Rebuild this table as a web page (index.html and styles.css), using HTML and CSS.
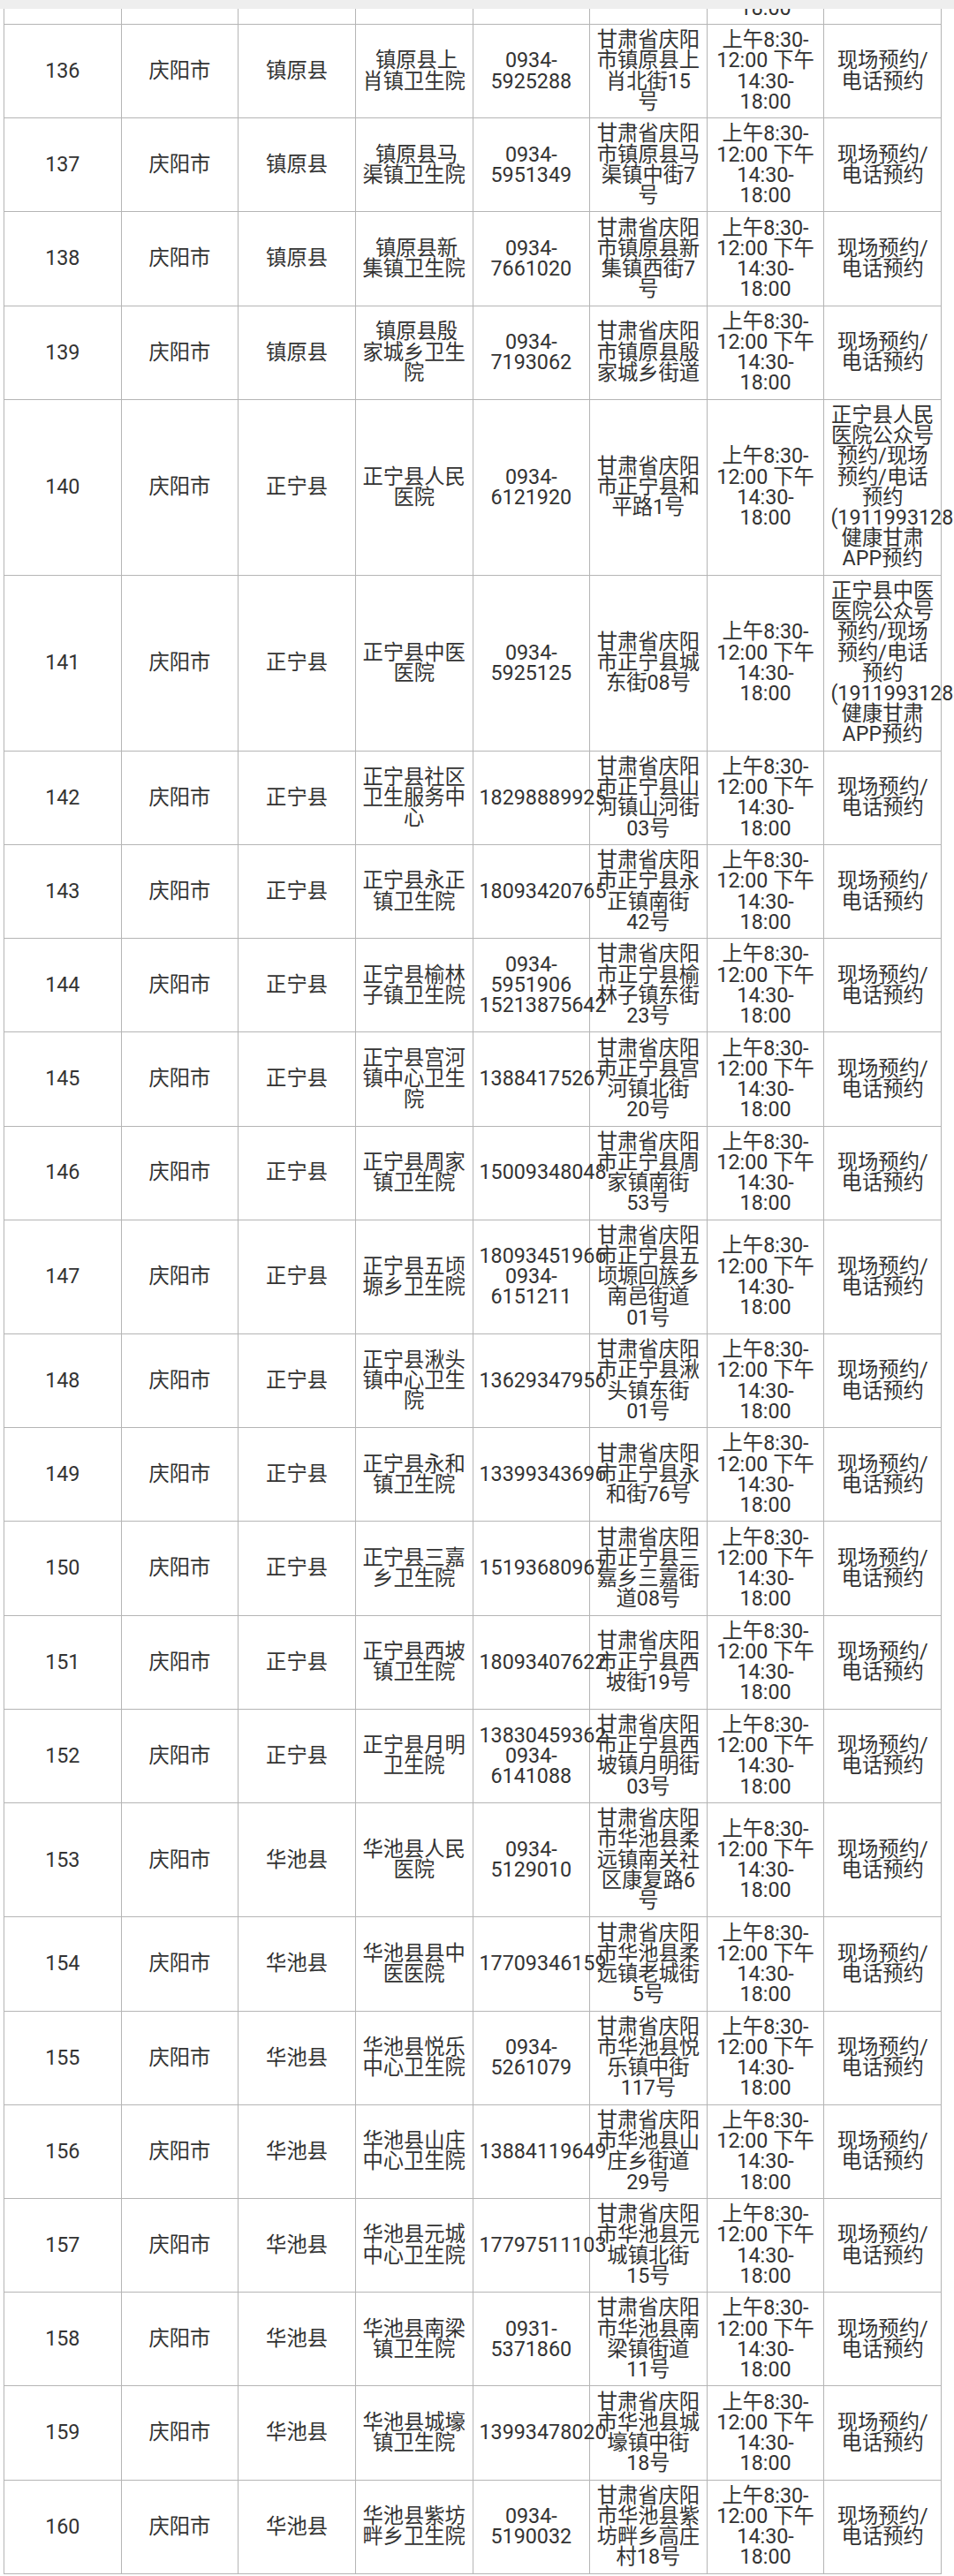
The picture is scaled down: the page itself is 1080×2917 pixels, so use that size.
FILE: index.html
```html
<!DOCTYPE html>
<html lang="zh-CN">
<head>
<meta charset="utf-8">
<title>庆阳市医疗机构预约方式</title>
<link rel="stylesheet" href="styles.css">
</head>
<body>
<div class="topbar"></div>
<table class="list">
<tbody>
<tr class="cut"><td></td><td></td><td></td><td></td><td></td><td></td><td><div class="tail"><span>18:00</span></div></td><td></td></tr>
<tr><td>136</td><td>庆阳市</td><td>镇原县</td><td>&nbsp;镇原县上肖镇卫生院</td><td>0934-<wbr>5925288</td><td>甘肃省庆阳市镇原县上肖北街15号</td><td>上午8:30-<wbr>12:00 下午14:30-<wbr>18:00</td><td>现场预约/电话预约</td></tr>
<tr><td>137</td><td>庆阳市</td><td>镇原县</td><td>&nbsp;镇原县马渠镇卫生院</td><td>0934-<wbr>5951349</td><td>甘肃省庆阳市镇原县马渠镇中街7号&#12288;</td><td>上午8:30-<wbr>12:00 下午14:30-<wbr>18:00</td><td>现场预约/电话预约</td></tr>
<tr><td>138</td><td>庆阳市</td><td>镇原县</td><td>&nbsp;镇原县新集镇卫生院</td><td>0934-<wbr>7661020</td><td>甘肃省庆阳市镇原县新集镇西街7号&#12288;</td><td>上午8:30-<wbr>12:00 下午14:30-<wbr>18:00</td><td>现场预约/电话预约</td></tr>
<tr><td>139</td><td>庆阳市</td><td>镇原县</td><td>&nbsp;镇原县殷家城乡卫生院</td><td>0934-<wbr>7193062</td><td>甘肃省庆阳市镇原县殷家城乡街道</td><td>上午8:30-<wbr>12:00 下午14:30-<wbr>18:00</td><td>现场预约/电话预约</td></tr>
<tr><td>140</td><td>庆阳市</td><td>正宁县</td><td>正宁县人民医院</td><td>0934-<wbr>6121920</td><td>甘肃省庆阳市正宁县和平路1号</td><td>上午8:30-<wbr>12:00 下午14:30-<wbr>18:00</td><td>正宁县人民医院公众号预约/现场预约/电话预约(19119931283)健康甘肃APP预约</td></tr>
<tr><td>141</td><td>庆阳市</td><td>正宁县</td><td>正宁县中医医院</td><td>0934-<wbr>5925125</td><td>甘肃省庆阳市正宁县城东街08号</td><td>上午8:30-<wbr>12:00 下午14:30-<wbr>18:00</td><td>正宁县中医医院公众号预约/现场预约/电话预约(19119931283)健康甘肃APP预约</td></tr>
<tr><td>142</td><td>庆阳市</td><td>正宁县</td><td>正宁县社区卫生服务中心</td><td>18298889925</td><td>甘肃省庆阳市正宁县山河镇山河街03号</td><td>上午8:30-<wbr>12:00 下午14:30-<wbr>18:00</td><td>现场预约/电话预约</td></tr>
<tr><td>143</td><td>庆阳市</td><td>正宁县</td><td>正宁县永正镇卫生院</td><td>18093420765</td><td>甘肃省庆阳市正宁县永正镇南街42号</td><td>上午8:30-<wbr>12:00 下午14:30-<wbr>18:00</td><td>现场预约/电话预约</td></tr>
<tr><td>144</td><td>庆阳市</td><td>正宁县</td><td>正宁县榆林子镇卫生院</td><td>0934-<wbr>5951906 15213875642</td><td>甘肃省庆阳市正宁县榆林子镇东街23号</td><td>上午8:30-<wbr>12:00 下午14:30-<wbr>18:00</td><td>现场预约/电话预约</td></tr>
<tr><td>145</td><td>庆阳市</td><td>正宁县</td><td>正宁县宫河镇中心卫生院</td><td>13884175267</td><td>甘肃省庆阳市正宁县宫河镇北街20号</td><td>上午8:30-<wbr>12:00 下午14:30-<wbr>18:00</td><td>现场预约/电话预约</td></tr>
<tr><td>146</td><td>庆阳市</td><td>正宁县</td><td>正宁县周家镇卫生院</td><td>15009348048</td><td>甘肃省庆阳市正宁县周家镇南街53号</td><td>上午8:30-<wbr>12:00 下午14:30-<wbr>18:00</td><td>现场预约/电话预约</td></tr>
<tr><td>147</td><td>庆阳市</td><td>正宁县</td><td>正宁县五顷塬乡卫生院</td><td>18093451966 0934-<wbr>6151211</td><td>甘肃省庆阳市正宁县五顷塬回族乡南邑街道01号</td><td>上午8:30-<wbr>12:00 下午14:30-<wbr>18:00</td><td>现场预约/电话预约</td></tr>
<tr><td>148</td><td>庆阳市</td><td>正宁县</td><td>正宁县湫头镇中心卫生院</td><td>13629347956</td><td>甘肃省庆阳市正宁县湫头镇东街01号</td><td>上午8:30-<wbr>12:00 下午14:30-<wbr>18:00</td><td>现场预约/电话预约</td></tr>
<tr><td>149</td><td>庆阳市</td><td>正宁县</td><td>正宁县永和镇卫生院</td><td>13399343696</td><td>甘肃省庆阳市正宁县永和街76号</td><td>上午8:30-<wbr>12:00 下午14:30-<wbr>18:00</td><td>现场预约/电话预约</td></tr>
<tr><td>150</td><td>庆阳市</td><td>正宁县</td><td>正宁县三嘉乡卫生院</td><td>15193680967</td><td>甘肃省庆阳市正宁县三嘉乡三嘉街道08号</td><td>上午8:30-<wbr>12:00 下午14:30-<wbr>18:00</td><td>现场预约/电话预约</td></tr>
<tr><td>151</td><td>庆阳市</td><td>正宁县</td><td>正宁县西坡镇卫生院</td><td>18093407622</td><td>甘肃省庆阳市正宁县西坡街19号</td><td>上午8:30-<wbr>12:00 下午14:30-<wbr>18:00</td><td>现场预约/电话预约</td></tr>
<tr><td>152</td><td>庆阳市</td><td>正宁县</td><td>正宁县月明卫生院</td><td>13830459362 0934-<wbr>6141088</td><td>甘肃省庆阳市正宁县西坡镇月明街03号</td><td>上午8:30-<wbr>12:00 下午14:30-<wbr>18:00</td><td>现场预约/电话预约</td></tr>
<tr><td>153</td><td>庆阳市</td><td>华池县</td><td>华池县人民医院</td><td>0934-<wbr>5129010</td><td>甘肃省庆阳市华池县柔远镇南关社区康复路6号</td><td>上午8:30-<wbr>12:00 下午14:30-<wbr>18:00</td><td>现场预约/电话预约</td></tr>
<tr><td>154</td><td>庆阳市</td><td>华池县</td><td>华池县县中医医院</td><td>17709346159</td><td>甘肃省庆阳市华池县柔远镇老城街5号</td><td>上午8:30-<wbr>12:00 下午14:30-<wbr>18:00</td><td>现场预约/电话预约</td></tr>
<tr><td>155</td><td>庆阳市</td><td>华池县</td><td>华池县悦乐中心卫生院</td><td>0934-<wbr>5261079</td><td>甘肃省庆阳市华池县悦乐镇中街117号</td><td>上午8:30-<wbr>12:00 下午14:30-<wbr>18:00</td><td>现场预约/电话预约</td></tr>
<tr><td>156</td><td>庆阳市</td><td>华池县</td><td>华池县山庄中心卫生院</td><td>13884119649</td><td>甘肃省庆阳市华池县山庄乡街道29号</td><td>上午8:30-<wbr>12:00 下午14:30-<wbr>18:00</td><td>现场预约/电话预约</td></tr>
<tr><td>157</td><td>庆阳市</td><td>华池县</td><td>华池县元城中心卫生院</td><td>17797511103</td><td>甘肃省庆阳市华池县元城镇北街15号</td><td>上午8:30-<wbr>12:00 下午14:30-<wbr>18:00</td><td>现场预约/电话预约</td></tr>
<tr><td>158</td><td>庆阳市</td><td>华池县</td><td>华池县南梁镇卫生院</td><td>0931-<wbr>5371860</td><td>甘肃省庆阳市华池县南梁镇街道11号</td><td>上午8:30-<wbr>12:00 下午14:30-<wbr>18:00</td><td>现场预约/电话预约</td></tr>
<tr><td>159</td><td>庆阳市</td><td>华池县</td><td>华池县城壕镇卫生院</td><td>13993478020</td><td>甘肃省庆阳市华池县城壕镇中街18号</td><td>上午8:30-<wbr>12:00 下午14:30-<wbr>18:00</td><td>现场预约/电话预约</td></tr>
<tr><td>160</td><td>庆阳市</td><td>华池县</td><td>华池县紫坊畔乡卫生院</td><td>0934-<wbr>5190032</td><td>甘肃省庆阳市华池县紫坊畔乡高庄村18号</td><td>上午8:30-<wbr>12:00 下午14:30-<wbr>18:00</td><td>现场预约/电话预约</td></tr>
</tbody>
</table>
</body>
</html>
```

FILE: styles.css
```css
html, body {
  margin: 0;
  padding: 0;
  background: #ffffff;
  overflow-x: hidden;
}

body {
  font-family: Roboto, "Noto Sans CJK SC", sans-serif;
  color: #333333;
}

.topbar {
  height: 10px;
  background: #eeeeee;
}

.list {
  border-collapse: collapse;
  table-layout: fixed;
  width: 1062px;
  margin-left: 4px;
  font-size: 23.3px;
  line-height: 23.2px;
}

.list td {
  border: 1px solid #b5b5b5;
  padding: 6.2px 7px;
  text-align: center;
  vertical-align: middle;
}

.list .cut td {
  border-top: 0;
  padding: 0;
  height: 17px;
  vertical-align: bottom;
}

.tail {
  height: 17px;
  overflow: hidden;
  display: flex;
  flex-direction: column;
  justify-content: flex-end;
}

.tail span {
  display: block;
  margin-bottom: 6.2px;
}
```
